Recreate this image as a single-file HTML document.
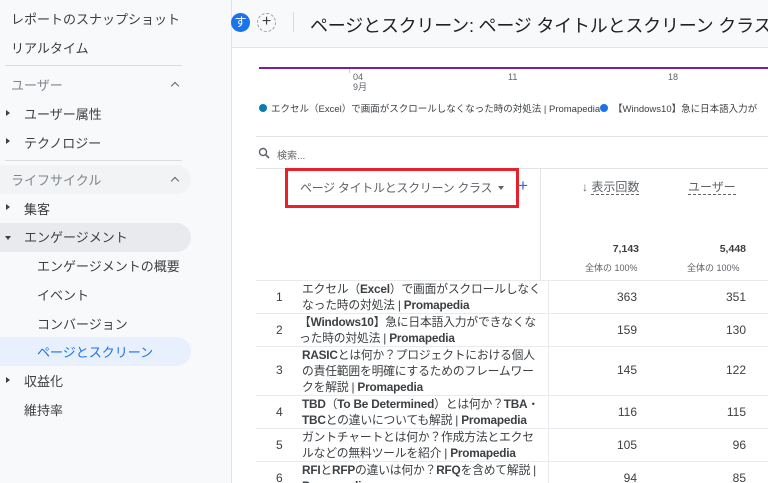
<!DOCTYPE html>
<html><head><meta charset="utf-8"><style>
*{margin:0;padding:0;box-sizing:border-box}
html,body{width:768px;height:483px;overflow:hidden}
body{background:#fff;font-family:"Liberation Sans","Noto Sans CJK JP",sans-serif;color:#3c4043;position:relative}
.a{position:absolute;white-space:nowrap}
#side{position:absolute;left:0;top:0;width:232px;height:483px;background:#f8f9fa;border-right:1px solid #e3e3e3}
.s{position:absolute;font-size:13px;color:#3c4043}
.g{color:#80868b}
.tri{position:absolute;width:0;height:0;border-top:3.5px solid transparent;border-bottom:3.5px solid transparent;border-left:4px solid #3c4043}
.trd{position:absolute;width:0;height:0;border-left:3.5px solid transparent;border-right:3.5px solid transparent;border-top:4px solid #3c4043}
.hr{position:absolute;left:5px;width:177px;height:1px;background:#dadce0}
.car{position:absolute;width:6px;height:6px;border-left:1.6px solid #5f6368;border-top:1.6px solid #5f6368;transform:rotate(45deg)}
.row{position:absolute;left:256px;width:512px;border-bottom:1px solid #e8eaed;background:#fff}
.row .n{position:absolute;left:20px;font-size:12px;color:#3c4043}
.row .t{position:absolute;left:46px;width:244px;font-size:11.8px;letter-spacing:-0.2px;line-height:16px;color:#3c4043;white-space:normal}
.row .t b{font-weight:bold}
.row .v1{position:absolute;right:131px;font-size:12px}
.row .v2{position:absolute;right:22px;font-size:12px}
.row .d{position:absolute;left:292px;top:0;bottom:0;width:1px;background:#e8eaed}
</style></head><body>
<div id="side">
<div class="s" style="left:11px;top:9px">レポートのスナップショット</div>
<div class="s" style="left:11px;top:38px">リアルタイム</div>
<div class="hr" style="top:65px"></div>
<div class="s g" style="left:11px;top:75px">ユーザー</div>
<div class="car" style="left:172px;top:83px"></div>
<div class="tri" style="left:6px;top:110px"></div>
<div class="s" style="left:24px;top:104px">ユーザー属性</div>
<div class="tri" style="left:6px;top:138px"></div>
<div class="s" style="left:24px;top:133px">テクノロジー</div>
<div class="hr" style="top:160px"></div>
<div style="position:absolute;left:0;top:165px;width:191px;height:29px;background:#f1f3f4;border-radius:0 15px 15px 0"></div>
<div class="s g" style="left:11px;top:170px">ライフサイクル</div>
<div class="car" style="left:172px;top:178px"></div>
<div class="tri" style="left:6px;top:204px"></div>
<div class="s" style="left:24px;top:199px">集客</div>
<div style="position:absolute;left:0;top:223px;width:191px;height:29px;background:#e8eaed;border-radius:0 15px 15px 0"></div>
<div class="trd" style="left:5px;top:236px"></div>
<div class="s" style="left:24px;top:227px">エンゲージメント</div>
<div class="s" style="left:37px;top:256px">エンゲージメントの概要</div>
<div class="s" style="left:37px;top:285px">イベント</div>
<div class="s" style="left:37px;top:314px">コンバージョン</div>
<div style="position:absolute;left:0;top:337px;width:191px;height:29px;background:#e8f0fe;border-radius:0 15px 15px 0"></div>
<div class="s" style="left:37px;top:342px;color:#1a73e8">ページとスクリーン</div>
<div class="tri" style="left:6px;top:377px"></div>
<div class="s" style="left:24px;top:371px">収益化</div>
<div class="s" style="left:24px;top:400px">維持率</div>
</div>
<div style="position:absolute;left:232px;top:0;width:536px;height:48px;background:#f8f9fa;border-bottom:1px solid #e3e3e3;overflow:hidden">
<div class="a" style="left:78px;top:12px;font-size:18px;letter-spacing:-0.2px;color:#202124">ページとスクリーン: ページ タイトルとスクリーン クラス</div>
</div>
<div class="a" style="left:231px;top:13px;width:19px;height:19px;border-radius:50%;background:#1a73e8;color:#fff;font-size:12px;text-align:center;line-height:19px">す</div>
<div class="a" style="left:257px;top:13px;width:19px;height:19px;border-radius:50%;border:1px dashed #9aa0a6;color:#3c4043;font-size:16px;text-align:center;line-height:16px">+</div>
<div class="a" style="left:293px;top:12px;width:1px;height:20px;background:#dadce0"></div>
<div class="a" style="left:259px;top:67px;width:509px;height:2px;background:#7b1fa2"></div>
<div class="a" style="left:349px;top:69px;width:1px;height:4px;background:#ccc"></div>
<div class="a" style="left:353px;top:72px;font-size:9px;color:#5f6368;line-height:10px">04<br>9月</div>
<div class="a" style="left:508px;top:72px;font-size:9px;color:#5f6368">11</div>
<div class="a" style="left:668px;top:72px;font-size:9px;color:#5f6368">18</div>
<div class="a" style="left:259px;top:104px;width:8px;height:8px;border-radius:50%;background:#0b7bb4"></div>
<div class="a" style="left:271px;top:101px;font-size:9.5px;color:#3c4043">エクセル（Excel）で画面がスクロールしなくなった時の対処法 | Promapedia</div>
<div class="a" style="left:600px;top:104px;width:8px;height:8px;border-radius:50%;background:#1a73e8"></div>
<div class="a" style="left:613px;top:101px;font-size:9.5px;color:#3c4043">【Windows10】急に日本語入力が</div>
<div class="a" style="left:256px;top:136px;width:512px;height:1px;background:#e3e3e3"></div>
<svg class="a" style="left:258px;top:147px" width="12" height="12" viewBox="0 0 12 12"><circle cx="5" cy="5" r="3.5" fill="none" stroke="#5f6368" stroke-width="1.4"/><line x1="7.5" y1="7.5" x2="11" y2="11" stroke="#5f6368" stroke-width="1.6"/></svg>
<div class="a" style="left:277px;top:147px;font-size:10px;color:#5f6368">検索...</div>
<div class="a" style="left:256px;top:168px;width:512px;height:1px;background:#e3e3e3"></div>
<div class="a" style="left:540px;top:169px;width:1px;height:112px;background:#e3e3e3"></div>
<div class="a" style="left:285px;top:168px;width:234px;height:40px;border:3px solid #e8202a"></div>
<div class="a" style="left:300px;top:179px;font-size:12px;letter-spacing:-0.3px;color:#5f6368">ページ タイトルとスクリーン クラス</div>
<div class="trd" style="left:498px;top:186px;border-top-color:#5f6368"></div>
<div class="a" style="left:518px;top:176px;font-size:17px;color:#1a73e8">+</div>
<div class="a" style="left:582px;top:178px;font-size:12px;color:#5f6368">↓ <span style="border-bottom:1px dashed #5f6368">表示回数</span></div>
<div class="a" style="left:688px;top:178px;font-size:12px;color:#5f6368"><span style="border-bottom:1px dashed #5f6368">ユーザー</span></div>
<div class="a" style="left:601px;top:243px;font-size:10.5px;font-weight:bold;color:#3c4043;width:38px;text-align:right">7,143</div>
<div class="a" style="left:585px;top:261px;font-size:9px;color:#5f6368">全体の 100%</div>
<div class="a" style="left:708px;top:243px;font-size:10.5px;font-weight:bold;color:#3c4043;width:38px;text-align:right">5,448</div>
<div class="a" style="left:687px;top:261px;font-size:9px;color:#5f6368">全体の 100%</div>
<div class="row" style="top:280px;height:34px;border-top:1px solid #e8eaed"><div class="d"></div><div class="n" style="top:9px">1</div><div class="t" style="top:0px">エクセル（<b>Excel</b>）で画面がスクロールしなくなった時の対処法 | <b>Promapedia</b></div><div class="v1" style="top:9px">363</div><div class="v2" style="top:9px">351</div></div>
<div class="row" style="top:314px;height:33px"><div class="d"></div><div class="n" style="top:9px">2</div><div class="t" style="top:0px;left:43px;width:241px">【<b>Windows10</b>】急に日本語入力ができなくなった時の対処法 | <b>Promapedia</b></div><div class="v1" style="top:9px">159</div><div class="v2" style="top:9px">130</div></div>
<div class="row" style="top:347px;height:49px"><div class="d"></div><div class="n" style="top:16px">3</div><div class="t" style="top:0px;width:238px"><b>RASIC</b>とは何か？プロジェクトにおける個人の責任範囲を明確にするためのフレームワークを解説 | <b>Promapedia</b></div><div class="v1" style="top:16px">145</div><div class="v2" style="top:16px">122</div></div>
<div class="row" style="top:396px;height:33px"><div class="d"></div><div class="n" style="top:9px">4</div><div class="t" style="top:0px;width:238px"><b>TBD</b>（<b>To Be Determined</b>）とは何か？<b>TBA</b>・<b>TBC</b>との違いについても解説 | <b>Promapedia</b></div><div class="v1" style="top:9px">116</div><div class="v2" style="top:9px">115</div></div>
<div class="row" style="top:429px;height:33px"><div class="d"></div><div class="n" style="top:9px">5</div><div class="t" style="top:0px;width:238px">ガントチャートとは何か？作成方法とエクセルなどの無料ツールを紹介 | <b>Promapedia</b></div><div class="v1" style="top:9px">105</div><div class="v2" style="top:9px">96</div></div>
<div class="row" style="top:462px;height:40px"><div class="d"></div><div class="n" style="top:9px">6</div><div class="t" style="top:0px;width:238px"><b>RFI</b>と<b>RFP</b>の違いは何か？<b>RFQ</b>を含めて解説 | <b>Promapedia</b></div><div class="v1" style="top:9px">94</div><div class="v2" style="top:9px">85</div></div>
</body></html>
